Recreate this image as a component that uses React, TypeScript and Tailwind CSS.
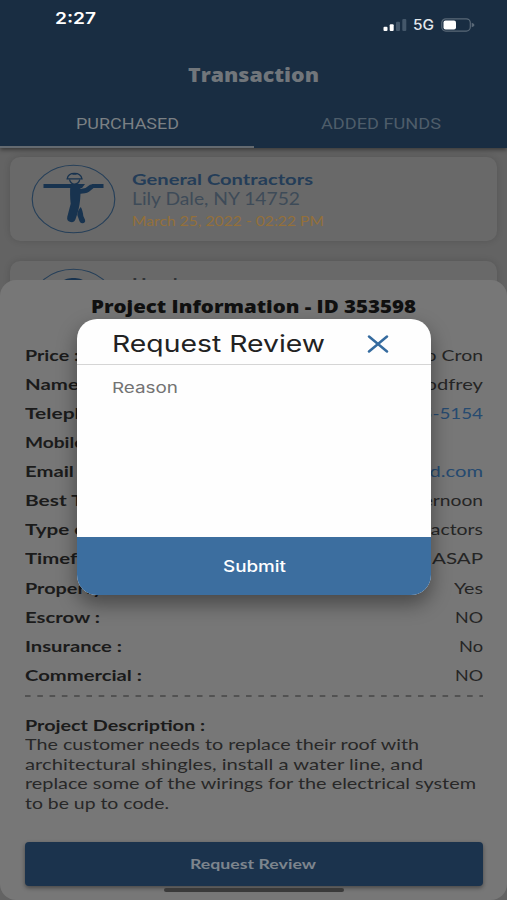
import { useLayoutEffect, useRef, useState } from "react";

interface StretchTextProps {
  text: string;
  width: number;
  className?: string;
}

interface DetailRow {
  label: string;
  value: string;
  labelWidth: number;
  valueWidth: number;
  link?: boolean;
}

const rows: DetailRow[] = [
  { label: "Price :", value: "50 Pro Cron", labelWidth: 54, valueWidth: 103 },
  { label: "Name :", value: "Lily Godfrey", labelWidth: 64, valueWidth: 107 },
  { label: "Telephone :", value: "716-555-5154", labelWidth: 107, valueWidth: 123, link: true },
  { label: "Mobile :", value: "", labelWidth: 69, valueWidth: 0 },
  { label: "Email :", value: "lily@cloud.com", labelWidth: 59, valueWidth: 132, link: true },
  { label: "Best Time :", value: "Afternoon", labelWidth: 103, valueWidth: 86 },
  { label: "Type of Work :", value: "General Contractors", labelWidth: 134, valueWidth: 172 },
  { label: "Timeframe :", value: "ASAP", labelWidth: 108, valueWidth: 51 },
  { label: "Property :", value: "Yes", labelWidth: 87, valueWidth: 29 },
  { label: "Escrow :", value: "NO", labelWidth: 75, valueWidth: 28 },
  { label: "Insurance :", value: "No", labelWidth: 97, valueWidth: 24 },
  { label: "Commercial :", value: "NO", labelWidth: 117, valueWidth: 28 },
];

const description = [
  { text: "The customer needs to replace their roof with", width: 394 },
  { text: "architectural shingles, install a water line, and", width: 398 },
  { text: "replace some of the wirings for the electrical system", width: 451 },
  { text: "to be up to code.", width: 144 },
];

const StretchText = ({ text, width, className = "" }: StretchTextProps) => {
  const ref = useRef<HTMLSpanElement | null>(null);
  const [scale, setScale] = useState(1);

  useLayoutEffect(() => {
    if (ref.current && ref.current.offsetWidth > 0) {
      setScale(width / ref.current.getBoundingClientRect().width);
    }
  }, []); // eslint-disable-line react-hooks/exhaustive-deps

  return (
    <span className={`block text-left whitespace-nowrap ${className}`} style={{ width }}>
      <span
        ref={ref}
        className="inline-block origin-left"
        style={{ transform: `scaleX(${scale})` }}
      >
        {text}
      </span>
    </span>
  );
};

const StatusIcons = () => (
  <svg className="h-[14px] w-[92px]" viewBox="0 0 92 14">
    <rect x="0.5" y="8.7" width="4" height="4.3" rx="1" fill="#fff" />
    <rect x="6.7" y="6.3" width="4" height="6.7" rx="1" fill="#fff" />
    <rect x="13" y="3.8" width="4" height="9.2" rx="1" fill="#44576a" />
    <rect x="19.3" y="1" width="4" height="12" rx="1" fill="#44576a" />
    <rect x="58.8" y="0.8" width="28.5" height="12.3" rx="4" fill="none" stroke="#596877" strokeWidth="1.2" />
    <rect x="60.5" y="2.5" width="12.5" height="9" rx="2" fill="#fff" />
    <path d="M88.7 4.7c1.8.7 2.7 1.4 2.7 2.3s-.9 1.6-2.7 2.3z" fill="#596877" />
  </svg>
);

const WorkerIcon = () => (
  <svg className="h-[70px] w-[85px] shrink-0" viewBox="0 0 85 70" fill="#18334f">
    <ellipse cx="42.5" cy="35" rx="41.3" ry="33.8" fill="none" stroke="#253f59" strokeWidth="1.1" />
    <path d="M36.200 14.800c.6-3.600 3.300-5.400 7.300-5.400s6.700 1.800 7.500 5.400z" fill="none" stroke="#18334f" strokeWidth="1.300" />
    <path d="M41 9.300h5l-.6 1.500h-3.800z" />
    <path d="M38.500 15.500c.7 2.800 2.300 4.600 5 4.600s4.700-1.800 5.300-4.600" fill="none" stroke="#18334f" strokeWidth="1.200" />
    <path d="M12.500 20H54L51 24H12.500z" />
    <path d="M61.500 20H72.500V24H57z" />
    <path d="M39.500 20.500h10v4.400l5-.8 4.500-3.300 4.500-.9 1.800 1.900-7.300 6c-2.500 1.400-5.500 1.900-8.500 1.900-.2 4-.4 7.300-1 10.800-1 6-2.500 10.500-4 14.800-.8 2.400-2.700 3.300-5 2.800-2.800-.6-3.800-2.600-3.200-5.300l3.400-13c-.7-6.500-.9-13-.2-19.300z" />
    <path d="M49.800 43c1.400 2.500 2.200 5.500 2.500 9l1.700 3.800c.7 2.100-.6 3.400-2.500 3.400-2.200 0-2.800-1.500-3.500-3.500l-1.700-4.700c.2-3.300 1.500-6 3.500-8z" />
  </svg>
);

const Header = () => (
  <header className="flex h-[148px] flex-col bg-[#192d42] shadow-[0_2px_4px_rgba(0,0,0,0.4)]">
    <div className="flex h-[50px] items-start justify-between pl-[55px] pr-[32px] font-['Inter']">
      <StretchText text="2:27" width={41} className="mt-[7px] text-[16px] leading-[22px] font-semibold text-white" />
      <div className="relative mt-[18px] flex">
        <StatusIcons />
        <StretchText
          text="5G"
          width={21}
          className="absolute left-[30px] top-[-1px] text-[14px] leading-[16px] font-medium text-[#e4e8ec]"
        />
      </div>
    </div>
    <div className="flex h-[49px] items-center justify-center pt-px">
      <StretchText
        text="Transaction"
        width={131}
        className="font-['Open_Sans'] text-[20px] leading-[28px] font-extrabold text-[#71767b]"
      />
    </div>
    <nav className="flex grow items-end font-['Roboto'] text-[14px]">
      <div className="flex h-[49px] w-[254px] items-center justify-center border-b-2 border-[#646a70] pt-[3px] text-[#7b8084]">
        <StretchText text="PURCHASED" width={103} />
      </div>
      <div className="flex h-[49px] grow items-center justify-center pt-px text-[#4e5d6a]">
        <StretchText text="ADDED FUNDS" width={120} />
      </div>
    </nav>
  </header>
);

const Transactions = () => (
  <section className="flex flex-col gap-[20px] px-[10px] pt-[9px]">
    <article className="flex h-[84px] items-center rounded-[10px] bg-[#696969] pl-[21px] shadow-[0_0_7px_rgba(0,0,0,0.14)]">
      <WorkerIcon />
      <div className="ml-[16px]">
        <StretchText text="General Contractors" width={181} className="text-[16px] leading-[20px] font-bold text-[#243d58]" />
        <StretchText text="Lily Dale, NY 14752" width={168} className="text-[16.500px] leading-[20px] text-[#3e4b58]" />
        <StretchText text="March 25, 2022 - 02:22 PM" width={192} className="mt-[3px] text-[13px] leading-[18px] text-[#94703a]" />
      </div>
    </article>
    <article className="flex h-[84px] items-center rounded-[10px] bg-[#696969] pl-[21px] shadow-[0_0_7px_rgba(0,0,0,0.14)]">
      <svg className="h-[70px] w-[85px] shrink-0" viewBox="0 0 85 70">
        <ellipse cx="42.5" cy="35" rx="41.3" ry="33.8" fill="none" stroke="#253f59" strokeWidth="1.1" />
        <path d="M32 13c3-4 18-4 21 0l-5 .8c-3-1.500-7-1.500-10 0z" fill="#18334f" />
      </svg>
      <StretchText text="Handyman" width={92} className="mb-[40px] ml-[16px] text-[16px] leading-[20px] font-bold text-[#303336]" />
    </article>
  </section>
);

const ProjectSheet = () => (
  <section className="absolute inset-x-0 top-[280px] flex h-[620px] flex-col rounded-[16px] bg-[#777777] pr-[24px] pl-[25px] text-[#1b1b1b]">
    <h2 className="flex h-[60px] justify-center pt-[13px] pr-[2px]">
      <StretchText
        text="Project Information - ID 353598"
        width={325}
        className="font-['Open_Sans'] text-[18px] leading-[26px] font-extrabold text-[#101010]"
      />
    </h2>
    <div className="text-[16px]">
      {rows.map((row) => (
        <div key={row.label} className="flex h-[29.140px] items-center justify-between">
          <StretchText text={row.label} width={row.labelWidth} className="font-bold" />
          {row.value && (
            <StretchText
              text={row.value}
              width={row.valueWidth}
              className={row.link ? "text-[#264a70]" : "text-[#252525]"}
            />
          )}
        </div>
      ))}
    </div>
    <svg className="mt-[5px] h-[2px] w-full shrink-0">
      <line x1="0" y1="1" x2="458" y2="1" stroke="#2f2f2f" strokeWidth="1.2" strokeDasharray="5.600 6.680" />
    </svg>
    <div className="mt-[18px] text-[16px] leading-[19.500px]">
      <StretchText text="Project Description :" width={180} className="font-bold" />
      {description.map((line) => (
        <StretchText key={line.text} text={line.text} width={line.width} className="text-[#282828]" />
      ))}
    </div>
    <button className="mt-[30px] flex h-[44px] w-full shrink-0 items-center justify-center rounded-[4px] bg-[#1b334d] pr-[2px] pb-[2px] shadow-[0_2px_4px_rgba(0,0,0,0.4)]">
      <StretchText text="Request Review" width={126} className="text-[14px] font-bold text-[#7d858d]" />
    </button>
    <div className="mx-auto mt-[2px] h-[4px] w-[180px] shrink-0 rounded-full bg-[#3a3a3a]" />
  </section>
);

const ReviewDialog = () => (
  <section className="absolute left-[77px] top-[319px] flex h-[276px] w-[354px] flex-col overflow-hidden rounded-[20px] bg-[#fefefe] font-['Inter'] shadow-[0_9px_20px_rgba(0,0,0,0.4)]">
    <div className="flex h-[46px] items-center justify-between border-b border-[#d5d5d5] pl-[35px] pr-[42px]">
      <StretchText text="Request Review" width={213} className="mt-[5px] text-[23px] leading-[32px] text-[#222222]" />
      <svg className="mt-[4px] h-[18px] w-[22px]" viewBox="0 0 22 18" stroke="#356b9f" strokeWidth="2.500" strokeLinecap="round">
        <path d="M2 1.500L20 16.500M20 1.500L2 16.500" />
      </svg>
    </div>
    <div className="grow pl-[35px] pt-[13px]">
      <StretchText text="Reason" width={66} className="text-[15px] leading-[20px] text-[#737373]" />
    </div>
    <button className="flex h-[58px] items-center justify-center bg-[#3c6e9f] pt-[2px]">
      <StretchText text="Submit" width={63} className="text-[15.500px] font-medium text-white" />
    </button>
  </section>
);

const App = () => (
  <main className="relative h-[900px] w-[507px] overflow-hidden bg-[#636363] font-['Lato',sans-serif]">
    <Header />
    <Transactions />
    <ProjectSheet />
    <ReviewDialog />
  </main>
);

export default App;
